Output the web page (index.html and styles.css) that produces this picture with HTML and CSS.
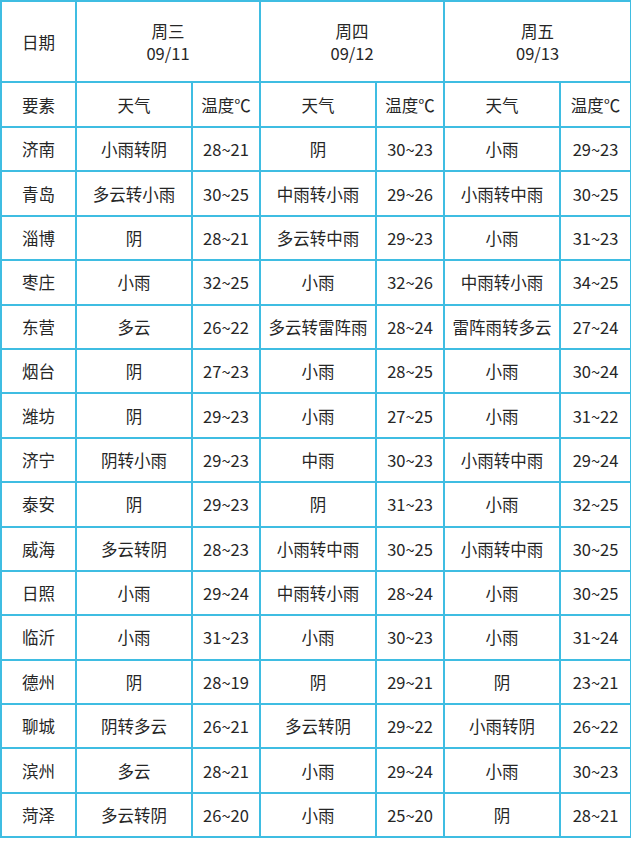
FILE: index.html
```html
<!DOCTYPE html>
<html lang="zh">
<head>
<meta charset="utf-8">
<link rel="stylesheet" href="styles.css">
</head>
<body>
<table class="wx">
<colgroup>
<col class="c-city"><col class="c-w"><col class="c-t"><col class="c-w"><col class="c-t"><col class="c-w"><col class="c-t2">
</colgroup>
<tr class="r-head">
<td>日期</td>
<td colspan="2">周三<br>09/11</td>
<td colspan="2">周四<br>09/12</td>
<td colspan="2">周五<br>09/13</td>
</tr>
<tr class="r-sub">
<td>要素</td><td>天气</td><td>温度℃</td><td>天气</td><td>温度℃</td><td>天气</td><td>温度℃</td>
</tr>
<tr><td>济南</td><td>小雨转阴</td><td>28~21</td><td>阴</td><td>30~23</td><td>小雨</td><td>29~23</td></tr>
<tr><td>青岛</td><td>多云转小雨</td><td>30~25</td><td>中雨转小雨</td><td>29~26</td><td>小雨转中雨</td><td>30~25</td></tr>
<tr><td>淄博</td><td>阴</td><td>28~21</td><td>多云转中雨</td><td>29~23</td><td>小雨</td><td>31~23</td></tr>
<tr><td>枣庄</td><td>小雨</td><td>32~25</td><td>小雨</td><td>32~26</td><td>中雨转小雨</td><td>34~25</td></tr>
<tr><td>东营</td><td>多云</td><td>26~22</td><td>多云转雷阵雨</td><td>28~24</td><td>雷阵雨转多云</td><td>27~24</td></tr>
<tr><td>烟台</td><td>阴</td><td>27~23</td><td>小雨</td><td>28~25</td><td>小雨</td><td>30~24</td></tr>
<tr><td>潍坊</td><td>阴</td><td>29~23</td><td>小雨</td><td>27~25</td><td>小雨</td><td>31~22</td></tr>
<tr><td>济宁</td><td>阴转小雨</td><td>29~23</td><td>中雨</td><td>30~23</td><td>小雨转中雨</td><td>29~24</td></tr>
<tr><td>泰安</td><td>阴</td><td>29~23</td><td>阴</td><td>31~23</td><td>小雨</td><td>32~25</td></tr>
<tr><td>威海</td><td>多云转阴</td><td>28~23</td><td>小雨转中雨</td><td>30~25</td><td>小雨转中雨</td><td>30~25</td></tr>
<tr><td>日照</td><td>小雨</td><td>29~24</td><td>中雨转小雨</td><td>28~24</td><td>小雨</td><td>30~25</td></tr>
<tr><td>临沂</td><td>小雨</td><td>31~23</td><td>小雨</td><td>30~23</td><td>小雨</td><td>31~24</td></tr>
<tr><td>德州</td><td>阴</td><td>28~19</td><td>阴</td><td>29~21</td><td>阴</td><td>23~21</td></tr>
<tr><td>聊城</td><td>阴转多云</td><td>26~21</td><td>多云转阴</td><td>29~22</td><td>小雨转阴</td><td>26~22</td></tr>
<tr><td>滨州</td><td>多云</td><td>28~21</td><td>小雨</td><td>29~24</td><td>小雨</td><td>30~23</td></tr>
<tr><td>菏泽</td><td>多云转阴</td><td>26~20</td><td>小雨</td><td>25~20</td><td>阴</td><td>28~21</td></tr>
</table>
</body>
</html>
```

FILE: styles.css
```css
html, body {
  margin: 0;
  padding: 0;
  background: #ffffff;
}

.wx {
  width: 631px;
  border-collapse: collapse;
  table-layout: fixed;
  font-family: "Noto Sans CJK SC", "Noto Sans", sans-serif;
  font-size: 16.5px;
  color: #262626;
}

.c-city { width: 75px; }
.c-w { width: 116px; }
.c-t { width: 68px; }
.c-t2 { width: 71px; }

.wx td {
  border: 2px solid #3fbde2;
  text-align: center;
  vertical-align: middle;
  padding: 0;
  height: 42.4px;
  line-height: 20px;
  white-space: nowrap;
}

.wx .r-head td {
  height: 79px;
  line-height: 22px;
}

.wx .r-sub td {
  height: 43px;
}
```
